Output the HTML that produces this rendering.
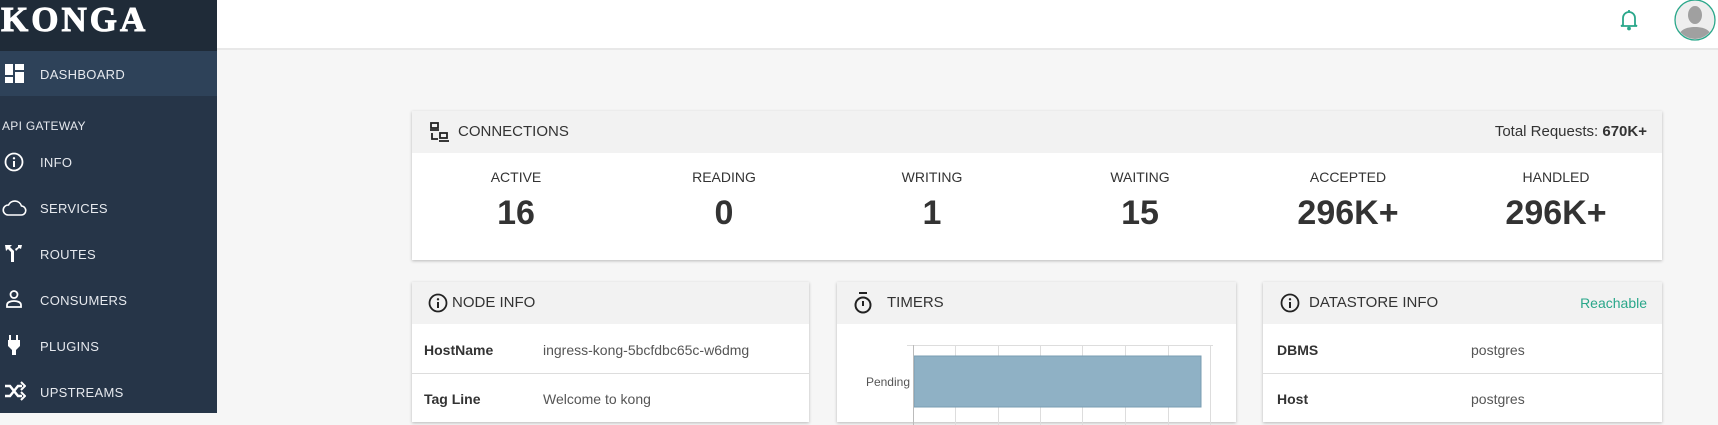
<!DOCTYPE html>
<html><head><meta charset="utf-8"><style>
*{margin:0;padding:0;box-sizing:border-box}
body{width:1718px;height:413px;overflow:hidden;background:#f6f6f6;font-family:"Liberation Sans",sans-serif;color:#333;position:relative}
.abs{position:absolute}
#side{left:0;top:0;width:217px;height:413px;background:#263548}
#logo{left:0;top:0;width:217px;height:51px;background:#1f2b38;color:#fff;font-family:"Liberation Serif",serif;font-weight:bold;font-size:35px;letter-spacing:3px;padding:0 0 0 1px;line-height:40px;-webkit-text-stroke:1px #fff}
#dash{left:0;top:51px;width:217px;height:45px;background:#2e4259}
.nav{position:absolute;left:40px;color:#e6e9ee;font-size:13px;letter-spacing:.3px}
.ic{position:absolute;left:4px}
#top{left:217px;top:0;width:1501px;height:50px;background:#fff;border-bottom:2px solid #e8e8e8}
.card{position:absolute;background:#fff;box-shadow:0 1px 3px rgba(0,0,0,.25)}
.hd{height:42px;background:#f2f2f2;font-size:15px;line-height:42px;padding-left:48px;position:relative}
.col{position:absolute;width:208px;text-align:center}
.lab{font-size:14px;top:58px}
.num{font-size:34px;font-weight:bold;top:83px;color:#333}
.row{position:absolute;left:0;right:0;height:1px;background:#ddd}
.k{position:absolute;font-weight:bold;font-size:14px}
.v{position:absolute;font-size:14px;color:#555}
</style></head><body>
<div id="side" class="abs"></div>
<div id="logo" class="abs">KONGA</div>
<div id="dash" class="abs"></div>
<svg class="ic" style="left:5px;top:64px" width="19" height="19" viewBox="0 0 19 19" fill="#fff"><rect x="0" y="0" width="8" height="11"/><rect x="10" y="0" width="9" height="6"/><rect x="0" y="13" width="8" height="6"/><rect x="10" y="8" width="9" height="11"/></svg>
<div class="nav" style="top:67px">DASHBOARD</div>
<div class="nav" style="left:2px;top:119px;font-size:12px">API GATEWAY</div>
<svg class="ic" style="top:152px" width="20" height="20" viewBox="0 0 20 20"><circle cx="10" cy="10" r="8.5" fill="none" stroke="#fff" stroke-width="1.8"/><rect x="9" y="9" width="2" height="6" fill="#fff"/><circle cx="10" cy="6.3" r="1.2" fill="#fff"/></svg>
<div class="nav" style="top:155px">INFO</div>
<svg class="ic" style="left:2px;top:199px" width="25" height="18" viewBox="0 0 25 18"><path d="M6 16h13a4.5 4.5 0 0 0 .5-9A7 7 0 0 0 6.5 6 5 5 0 0 0 6 16z" fill="none" stroke="#fff" stroke-width="1.6"/></svg>
<div class="nav" style="top:201px">SERVICES</div>
<svg class="ic" style="top:243px" width="20" height="20" viewBox="0 0 20 20" fill="#fff"><path d="M1 2h7l-2 2 4 4v11H7V9L4 6 2 8z"/><path d="M14 2l4 0-1 4-2-1-3 3-1-2 3-2z"/></svg>
<div class="nav" style="top:247px">ROUTES</div>
<svg class="ic" style="top:289px" width="20" height="20" viewBox="0 0 20 20" fill="none" stroke="#fff" stroke-width="1.8"><circle cx="10" cy="5.5" r="3.5"/><path d="M3 18v-2c0-3 4-4 7-4s7 1 7 4v2z"/></svg>
<div class="nav" style="top:293px">CONSUMERS</div>
<svg class="ic" style="left:7px;top:335px" width="14" height="20" viewBox="0 0 14 20" fill="#fff"><rect x="2" y="0" width="2" height="5"/><rect x="9" y="0" width="2" height="5"/><path d="M1 5h12v6l-4 4v5H5v-5L1 11z"/></svg>
<div class="nav" style="top:339px">PLUGINS</div>
<svg class="ic" style="top:381px" width="22" height="20" viewBox="0 0 22 20" fill="none" stroke="#fff" stroke-width="2.5"><path d="M1 5h5l8 10h4M1 15h5l8-10h4"/><path d="M17 1l4 4-4 4M17 11l4 4-4 4" stroke-width="2"/></svg>
<div class="nav" style="top:385px">UPSTREAMS</div>

<div id="top" class="abs"></div>
<svg class="abs" style="left:1620px;top:9px" width="18" height="22" viewBox="0 0 18 22" fill="none" stroke="#2aa78a" stroke-width="1.8"><path d="M3 16V9a6 6 0 0 1 12 0v7l2 1H1z"/><circle cx="9" cy="19.5" r="1" fill="#2aa78a"/><path d="M9 1v2"/></svg>
<svg class="abs" style="left:1672px;top:0px" width="46" height="42" viewBox="0 0 46 42"><circle cx="23" cy="20" r="20" fill="#eee" stroke="#2aa78a" stroke-width="1.3"/><clipPath id="c"><circle cx="23" cy="20" r="19"/></clipPath><g clip-path="url(#c)" fill="#a0a0a0"><ellipse cx="23" cy="15" rx="7" ry="9"/><path d="M6 40c0-10 8-13 17-13s17 3 17 13z"/></g></svg>

<div class="card" style="left:412px;top:111px;width:1250px;height:149px">
<div class="hd" style="padding-left:46px">CONNECTIONS<span style="position:absolute;right:15px;top:0">Total Requests: <b>670K+</b></span>
<svg style="position:absolute;left:17px;top:11px" width="22" height="22" viewBox="0 0 22 22" fill="none" stroke="#222" stroke-width="1.8"><rect x="2" y="1" width="7" height="5"/><path d="M1 8h9M3 11v6h6"/><rect x="11" y="11" width="7" height="5"/><path d="M10 19h10"/></svg></div>
<div class="col lab" style="left:0">ACTIVE</div><div class="col num" style="left:0">16</div>
<div class="col lab" style="left:208px">READING</div><div class="col num" style="left:208px">0</div>
<div class="col lab" style="left:416px">WRITING</div><div class="col num" style="left:416px">1</div>
<div class="col lab" style="left:624px">WAITING</div><div class="col num" style="left:624px">15</div>
<div class="col lab" style="left:832px">ACCEPTED</div><div class="col num" style="left:832px">296K+</div>
<div class="col lab" style="left:1040px">HANDLED</div><div class="col num" style="left:1040px">296K+</div>
</div>

<div class="card" style="left:412px;top:282px;width:397px;height:140px">
<div class="hd" style="padding-left:40px">NODE INFO
<svg style="position:absolute;left:16px;top:11px" width="20" height="20" viewBox="0 0 20 20"><circle cx="10" cy="10" r="8.5" fill="none" stroke="#222" stroke-width="1.8"/><rect x="9" y="9" width="2" height="6" fill="#222"/><circle cx="10" cy="6.3" r="1.2" fill="#222"/></svg></div>
<div class="k" style="left:12px;top:60px">HostName</div><div class="v" style="left:131px;top:60px">ingress-kong-5bcfdbc65c-w6dmg</div>
<div class="row" style="top:91px"></div>
<div class="k" style="left:12px;top:109px">Tag Line</div><div class="v" style="left:131px;top:109px">Welcome to kong</div>
</div>

<div class="card" style="left:837px;top:282px;width:399px;height:140px">
<div class="hd" style="padding-left:50px">TIMERS
<svg style="position:absolute;left:16px;top:9px" width="20" height="24" viewBox="0 0 20 24" fill="none" stroke="#222" stroke-width="2"><path d="M6 2h8"/><circle cx="10" cy="14" r="7.5"/><path d="M10 10v5"/></svg></div>
<svg style="position:absolute;left:70px;top:63px" width="306" height="80"><g stroke="#ddd" stroke-width="1"><path d="M0 .5H306"/><path d="M6.5 0V80M48.5 0V80M91.5 0V80M133.5 0V80M175.5 0V80M218.5 0V80M261.5 0V80M303.5 0V80"/></g><rect x="7" y="11" width="287" height="51" fill="#8fb1c5" stroke="#7a9db2"/><path d="M6.5 0V80" stroke="#bbb"/></svg>
<div style="position:absolute;left:0;width:73px;text-align:right;top:93px;font-size:12px;color:#555">Pending</div>
</div>

<div class="card" style="left:1263px;top:282px;width:399px;height:140px">
<div class="hd" style="padding-left:46px">DATASTORE INFO<span style="position:absolute;right:15px;top:0;color:#2aa78a;font-size:14px">Reachable</span>
<svg style="position:absolute;left:17px;top:11px" width="20" height="20" viewBox="0 0 20 20"><circle cx="10" cy="10" r="8.5" fill="none" stroke="#222" stroke-width="1.8"/><rect x="9" y="9" width="2" height="6" fill="#222"/><circle cx="10" cy="6.3" r="1.2" fill="#222"/></svg></div>
<div class="k" style="left:14px;top:60px">DBMS</div><div class="v" style="left:208px;top:60px">postgres</div>
<div class="row" style="top:91px"></div>
<div class="k" style="left:14px;top:109px">Host</div><div class="v" style="left:208px;top:109px">postgres</div>
</div>
</body></html>
